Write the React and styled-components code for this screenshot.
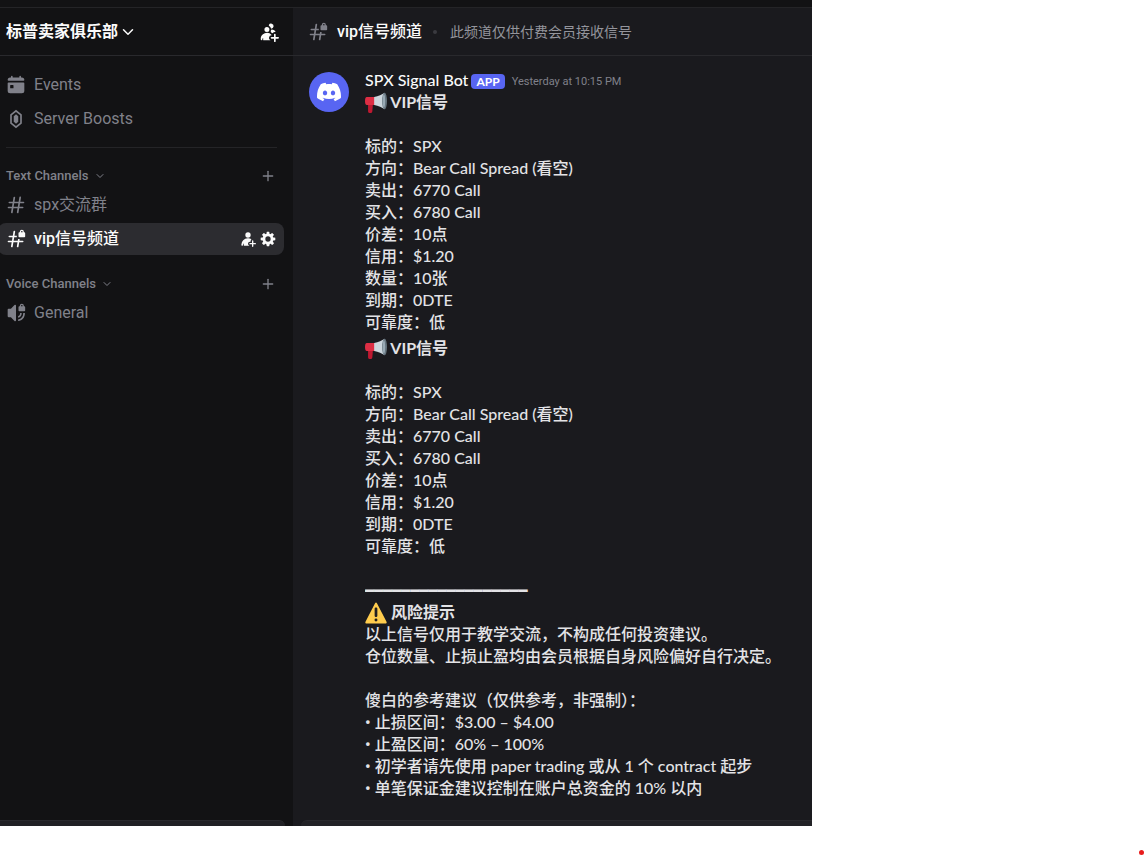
import styled, { createGlobalStyle } from "styled-components";
import { SiDiscord } from "react-icons/si";
import { ChevronDown, Plus } from "lucide-react";

const LOCK =
	"M16 4h.5v-.5a2.5 2.5 0 0 1 5 0V4h.5a1 1 0 0 1 1 1v4a1 1 0 0 1-1 1h-6a1 1 0 0 1-1-1V5a1 1 0 0 1 1-1Zm4-.5V4h-2v-.5a1 1 0 1 1 2 0Z";
const SMALL_PLUS =
	"M19 14a1 1 0 0 1 1 1v3h3a1 1 0 0 1 0 2h-3v3a1 1 0 0 1-2 0v-3h-3a1 1 0 1 1 0-2h3v-3a1 1 0 0 1 1-1Z";

const icons = {
	calendar: [
		"M7 1a1 1 0 0 1 1 1v.75c0 .14.11.25.25.25h7.5c.14 0 .25-.11.25-.25V2a1 1 0 1 1 2 0v.75c0 .14.11.25.25.25H19a3 3 0 0 1 3 3 1 1 0 0 1-1 1H3a1 1 0 0 1-1-1 3 3 0 0 1 3-3h.75c.14 0 .25-.11.25-.25V2a1 1 0 0 1 1-1Z",
		"M2 10a1 1 0 0 1 1-1h18a1 1 0 0 1 1 1v9a3 3 0 0 1-3 3H5a3 3 0 0 1-3-3v-9Zm3.5 2a.5.5 0 0 0-.5.5v3c0 .28.22.5.5.5h3a.5.5 0 0 0 .5-.5v-3a.5.5 0 0 0-.5-.5h-3Z",
	],
	boost: [
		"M12 1 19 6.6v10.8L12 23l-7-5.6V6.6L12 1Zm0 2.6L7 7.6v8.8l5 4 5-4V7.6l-5-4Z",
		"M12 6.2 14.7 8.6v6.8L12 17.8 9.3 15.4V8.6L12 6.2Z",
	],
	hash: [
		"M10.99 3.16A1 1 0 1 0 9 2.84L8.15 8H4a1 1 0 0 0 0 2h3.82l-.67 4H3a1 1 0 1 0 0 2h3.82l-.8 4.84a1 1 0 0 0 1.97.32L8.85 16h4.97l-.8 4.84a1 1 0 0 0 1.97.32l.86-5.16H20a1 1 0 1 0 0-2h-3.82l.67-4H21a1 1 0 1 0 0-2h-3.82l.8-4.84a1 1 0 1 0-1.97-.32L15.15 8h-4.97l.8-4.84ZM14.15 14l.67-4H9.85l-.67 4h4.97Z",
	],
	hashLock: [
		LOCK,
		"M12.5 8c.28 0 .5.22.5.5V9c0 .1 0 .2.02.31.03.34-.21.69-.56.69H9.85l-.67 4h4.97l.28-1.68c.06-.34.44-.52.77-.43a3 3 0 0 0 .8.11c.27 0 .47.24.43.5l-.25 1.5H20a1 1 0 1 1 0 2h-4.15l-.86 5.16a1 1 0 0 1-1.98-.32l.8-4.84H8.86l-.86 5.16A1 1 0 0 1 6 20.84L6.82 16H3a1 1 0 1 1 0-2h4.15l.67-4H4a1 1 0 1 1 0-2h4.15l.86-5.16a1 1 0 1 1 1.98.32L10.19 8h2.31Z",
	],
	speakerLock: [
		LOCK,
		"M12 3a1 1 0 0 0-1-1h-.06a1 1 0 0 0-.74.32L5.92 7H3a1 1 0 0 0-1 1v8a1 1 0 0 0 1 1h2.92l4.28 4.68a1 1 0 0 0 .74.32H11a1 1 0 0 0 1-1V3Z",
		"M16.9 12h2c0 3.3-1.6 5.2-4.4 5.7v-2c1.7-.5 2.4-1.6 2.4-3.7Z",
		"M20.7 12h2c0 5.5-2.9 8.9-8.2 9.7v-2c4.2-.8 6.2-3.3 6.2-7.7Z",
	],
	people: [
		"M14.5 8a3 3 0 1 0-2.7-4.3c-.2.4.06.86.44 1.12a5 5 0 0 1 2.14 3.08c.01.06.06.1.12.1ZM16.62 13.17c-.22.29-.65.37-.92.14-.34-.3-.7-.57-1.09-.82-.52-.33-.7-1.05-.47-1.63.11-.27.2-.57.26-.87.11-.54.55-1 1.1-.92 1.6.2 3.04.92 4.15 1.98.3.27-.25.95-.65.95a3 3 0 0 0-2.38 1.17ZM15.19 15.61c.13.16.02.39-.19.39a3 3 0 0 0-1.52 5.59c.2.12.26.41.02.41h-8a.5.5 0 0 1-.5-.5v-2.1c0-.25-.31-.33-.42-.1-.32.67-.67 1.58-.88 2.54a.2.2 0 0 1-.2.16A1.5 1.5 0 0 1 2 20.5a7.5 7.5 0 0 1 13.19-4.89ZM9.5 12a3 3 0 1 0 0-6 3 3 0 0 0 0 6Z",
		SMALL_PLUS,
	],
	person: [
		SMALL_PLUS,
		"M16.83 12.93c.26-.27.26-.75-.08-.92A9.5 9.5 0 0 0 12.47 11h-.94A9.53 9.53 0 0 0 2 20.53c0 .81.66 1.47 1.47 1.47h.22c.24 0 .44-.17.5-.4.29-1.12.84-2.17 1.32-2.91.14-.21.43-.1.4.15l-.26 2.61c-.02.3.2.55.5.55h7.64c.12 0 .17-.31.06-.36C12.82 21.14 12 20.22 12 19a3 3 0 0 1 3-3h.5a.5.5 0 0 0 .5-.5V15c0-.8.31-1.53.83-2.07ZM12 10a4 4 0 1 0 0-8 4 4 0 0 0 0 8Z",
	],
	gear: [
		"M10.56 1.1c-.46.05-.7.53-.64.98.18 1.16-.19 2.2-.98 2.53-.8.33-1.79-.15-2.49-1.1-.27-.36-.78-.52-1.14-.24-.77.59-1.45 1.27-2.04 2.04-.28.36-.12.87.24 1.14.96.7 1.43 1.7 1.1 2.49-.33.8-1.37 1.16-2.53.98-.45-.07-.93.18-.99.64a11.1 11.1 0 0 0 0 2.88c.06.46.54.7.99.64 1.16-.18 2.2.19 2.53.98.33.8-.14 1.79-1.1 2.49-.36.27-.52.78-.24 1.14.59.77 1.27 1.45 2.04 2.04.36.28.87.12 1.14-.24.7-.95 1.7-1.43 2.49-1.1.8.33 1.16 1.37.98 2.53-.07.45.18.93.64.99a11.1 11.1 0 0 0 2.88 0c.46-.06.7-.54.64-.99-.18-1.16.19-2.2.98-2.53.8-.33 1.79.14 2.49 1.1.27.36.78.52 1.14.24.77-.59 1.45-1.27 2.04-2.04.28-.36.12-.87-.24-1.14-.96-.7-1.43-1.7-1.1-2.49.33-.8 1.37-1.16 2.53-.98.45.07.93-.18.99-.64a11.1 11.1 0 0 0 0-2.88c-.06-.46-.54-.7-.99-.64-1.16.18-2.2-.19-2.53-.98-.33-.8.14-1.79 1.1-2.49.36-.27.52-.78.24-1.14a11.07 11.07 0 0 0-2.04-2.04c-.36-.28-.87-.12-1.14.24-.7.96-1.7 1.43-2.49 1.1-.8-.33-1.16-1.37-.98-2.53.07-.45-.18-.93-.64-.99a11.1 11.1 0 0 0-2.88 0ZM16 12a4 4 0 1 1-8 0 4 4 0 0 1 8 0Z",
	],
};

const Icon = ({ name, size = 20 }) => (
	<svg width={size} height={size} viewBox="0 0 24 24" fill="currentColor" aria-hidden="true">
		{icons[name].map((d) => (
			<path key={d} d={d} fillRule="evenodd" />
		))}
	</svg>
);

const Megaphone = () => (
	<Emoji viewBox="0 -2 36 36" role="img" aria-label="megaphone">
		<path fill="#be1931" d="M5 19h8l-1 12c-.2 2-1.5 3-3.5 3S5 33 5 31V19Z" />
		<path fill="#dd2e44" d="M3 8h14v13H3c-2 0-3-2-3-6.5S1 8 3 8Z" />
		<path fill="#ccd6dd" d="M15 8C22 7 28 4 32 1v27c-4-3-10-6-17-7V8Z" />
		<ellipse cx="32" cy="14.5" rx="4" ry="13.5" fill="#66757f" />
		<ellipse cx="31" cy="14.5" rx="2" ry="11" fill="#99aab5" />
	</Emoji>
);

const Warning = () => (
	<Emoji viewBox="0 -2 36 36" role="img" aria-label="warning">
		<path
			fill="#ffcc4d"
			d="M2.65 35C.81 35-.05 33.66.8 32.02L16.45 1.85c.85-1.64 2.25-1.64 3.1 0L35.2 32.02c.85 1.64-.01 2.98-1.85 2.98H2.65Z"
		/>
		<path
			fill="#231f20"
			d="M15.58 28.95a2.42 2.42 0 1 1 4.84 0 2.42 2.42 0 0 1-4.84 0Zm.19-18.29c0-1.3.96-2.1 2.23-2.1s2.23.84 2.23 2.1v11.56c0 1.26-.96 2.1-2.23 2.1s-2.23-.8-2.23-2.1V10.66Z"
		/>
	</Emoji>
);

const signal = [
	"",
	"标的：SPX",
	"方向：Bear Call Spread (看空)",
	"卖出：6770 Call",
	"买入：6780 Call",
	"价差：10点",
	"信用：$1.20",
	"数量：10张",
	"到期：0DTE",
	"可靠度：低",
];

const notice = [
	"以上信号仅用于教学交流，不构成任何投资建议。",
	"仓位数量、止损止盈均由会员根据自身风险偏好自行决定。",
	"",
	"傻白的参考建议（仅供参考，非强制）：",
];

const tips = [
	"止损区间：$3.00 – $4.00",
	"止盈区间：60% – 100%",
	"初学者请先使用 paper trading 或从 1 个 contract 起步",
	"单笔保证金建议控制在账户总资金的 10% 以内",
];

const Lines = ({ items }) => items.map((text, i) => <Line key={i}>{text}</Line>);

const Category = ({ title }) => (
	<CategoryRow>
		<CategoryButton>
			{title}
			<ChevronDown size={12} />
		</CategoryButton>
		<IconButton aria-label={`Create channel in ${title}`}>
			<Plus size={16} strokeWidth={2} />
		</IconButton>
	</CategoryRow>
);

const Channel = ({ icon, children }) => (
	<Row>
		<RowLink href="#">
			<Icon name={icon} />
			{children}
		</RowLink>
	</Row>
);

const App = () => {
	return (
		<Page>
			<GlobalStyle />
			<Window>
				<TitleBar />
				<Columns>
					<Sidebar>
						<Header>
							<ServerName>
								标普卖家俱乐部
								<ChevronDown size={18} strokeWidth={2} />
							</ServerName>
							<IconButton $bright aria-label="Invite to server">
								<Icon name="people" />
							</IconButton>
						</Header>
						<Nav>
							<Channel icon="calendar">Events</Channel>
							<Channel icon="boost">Server Boosts</Channel>
							<Divider />
							<Category title="Text Channels" />
							<Channel icon="hash">spx交流群</Channel>
							<Row $active>
								<RowLink href="#" $active>
									<Icon name="hashLock" />
									vip信号频道
								</RowLink>
								<IconButton $bright aria-label="Invite to channel">
									<Icon name="person" size={16} />
								</IconButton>
								<IconButton $bright aria-label="Edit channel">
									<Icon name="gear" size={16} />
								</IconButton>
							</Row>
							<Category title="Voice Channels" />
							<Channel icon="speakerLock">General</Channel>
						</Nav>
						<UserPanel />
					</Sidebar>
					<Chat>
						<Header $chat>
							<Icon name="hashLock" />
							<ChannelName>vip信号频道</ChannelName>
							<Dot />
							<Topic>此频道仅供付费会员接收信号</Topic>
						</Header>
						<Message>
							<Avatar>
								<SiDiscord size={24} />
							</Avatar>
							<Body>
								<Author>
									<span>SPX Signal Bot</span>
									<Badge>APP</Badge>
									<Time>Yesterday at 10:15 PM</Time>
								</Author>
								<Block>
									<Line as="h3">
										<Megaphone /> VIP信号
									</Line>
									<Lines items={signal} />
								</Block>
								<Block>
									<Line as="h3">
										<Megaphone /> VIP信号
									</Line>
									<Lines items={signal.filter((text) => !text.startsWith("数量"))} />
									<Line />
									<Rule>{"━".repeat(18)}</Rule>
									<Line as="h3">
										<Warning /> 风险提示
									</Line>
									<Lines items={notice} />
									{tips.map((tip) => (
										<Line key={tip}>
											<Bullet>•</Bullet> {tip}
										</Line>
									))}
								</Block>
							</Body>
						</Message>
						<Composer />
					</Chat>
				</Columns>
			</Window>
			<RecordingDot />
		</Page>
	);
};

const GlobalStyle = createGlobalStyle`
	* {
		box-sizing: border-box;
	}

	body {
		margin: 0;
		background: #fff;
		font-family: Roboto, "Noto Sans CJK SC", sans-serif;
		font-size: 16px;
	}

	button {
		padding: 0;
		border: 0;
		background: none;
		color: inherit;
		font: inherit;
		cursor: pointer;
	}

	svg {
		flex: none;
	}
`;

const Page = styled.div`
	position: relative;
	min-height: 100vh;
`;

const Window = styled.div`
	width: 70.9%;
	background: #121214;
	color: #e3e3e6;
	overflow: hidden;
`;

const TitleBar = styled.div`
	height: 8px;
	border-bottom: 1px solid #242427;
`;

const Columns = styled.div`
	display: grid;
	grid-template-columns: 293px minmax(0, 1fr);
`;

const Sidebar = styled.aside`
	display: flex;
	flex-direction: column;
	color: #80818a;
`;

const Header = styled.header`
	display: flex;
	align-items: center;
	justify-content: ${({ $chat }) => ($chat ? "flex-start" : "space-between")};
	height: 48px;
	padding: ${({ $chat }) => ($chat ? "0 15px" : "0 14px 0 6px")};
	border-bottom: 1px solid #29292d;
	color: #80818a;
`;

const ServerName = styled.button`
	display: flex;
	align-items: center;
	gap: 1px;
	color: #fbfbfb;
	font-weight: 700;
	line-height: 20px;
`;

const IconButton = styled.button`
	display: flex;
	color: ${({ $bright }) => ($bright ? "#fbfbfb" : "inherit")};
`;

const Nav = styled.nav`
	display: flex;
	flex-direction: column;
	flex: 1;
	padding: 13px 9px 0 0;
`;

const Row = styled.div`
	display: flex;
	align-items: center;
	gap: 4px;
	height: 32px;
	margin: 0 0 2px -2px;
	padding: 0 8px;
	border-radius: 8px;
	background: ${({ $active }) => ($active ? "#2c2c30" : "transparent")};
`;

const RowLink = styled.a`
	display: flex;
	flex: 1;
	align-items: center;
	gap: 8px;
	color: ${({ $active }) => ($active ? "#fbfbfb" : "inherit")};
	font-weight: ${({ $active }) => ($active ? 500 : 400)};
	line-height: 20px;
	text-decoration: none;
`;

const Divider = styled.hr`
	width: 271px;
	margin: 10px 0 1px 6px;
	border: 0;
	border-top: 1px solid #242427;
`;

const CategoryRow = styled.div`
	display: flex;
	align-items: center;
	justify-content: space-between;
	height: 24px;
	margin: 15px 0 1px;
	padding: 0 8px 0 6px;
`;

const CategoryButton = styled.button`
	display: flex;
	align-items: center;
	gap: 5px;
	font-size: 13px;
	font-weight: 500;
	line-height: 20px;
`;

const UserPanel = styled.div`
	height: 6px;
	margin-right: 8px;
	border-top: 1px solid #29292d;
	border-radius: 0 8px 0 0;
	background: #202024;
`;

const Chat = styled.main`
	display: flex;
	flex-direction: column;
	background: #1a1a1e;
`;

const ChannelName = styled.h1`
	margin: 0 0 0 9px;
	color: #fbfbfb;
	font-size: 16px;
	font-weight: 500;
	line-height: 20px;
`;

const Dot = styled.span`
	width: 4px;
	height: 4px;
	margin: 0 13px 0 11px;
	border-radius: 50%;
	background: #3a3a40;
`;

const Topic = styled.span`
	color: #94959c;
	font-size: 14px;
	line-height: 20px;
`;

const Message = styled.article`
	display: flex;
	gap: 16px;
	padding: 13px 16px 21px;
`;

const Avatar = styled.div`
	display: flex;
	flex: none;
	align-items: center;
	justify-content: center;
	width: 40px;
	height: 40px;
	margin-top: 3px;
	border-radius: 50%;
	background: #5865f2;
	color: #fff;
`;

const Body = styled.div`
	min-width: 0;
	font-family: Lato, "Noto Sans CJK SC", sans-serif;
	font-weight: 500;
	line-height: 22px;
`;

const Author = styled.div`
	display: flex;
	align-items: center;
	gap: 3px;
	height: 22px;
	color: #fbfbfb;
`;

const Badge = styled.span`
	margin-top: 2px;
	padding: 0 5px;
	border-radius: 4px;
	background: #5865f2;
	color: #fff;
	font-size: 12px;
	font-weight: 700;
	line-height: 15px;
`;

const Time = styled.time`
	margin: 4px 0 0 4px;
	color: #80818a;
	font-family: Roboto, sans-serif;
	font-size: 11px;
	font-weight: 400;
`;

const Block = styled.div`
	& + & {
		margin-top: 4px;
	}
`;

const Line = styled.p`
	min-height: 22px;
	margin: 0;
	font-size: 16px;
`;

const Rule = styled(Line)`
	height: 22px;
	padding-top: 1px;
	font-family: "DejaVu Sans Mono", monospace;
	font-size: 15px;
	overflow: hidden;
`;

const Bullet = styled.span`
	font-family: Roboto, sans-serif;
	line-height: 1;
`;

const Emoji = styled.svg`
	width: 22px;
	height: 22px;
	vertical-align: bottom;
	overflow: visible;
`;

const Composer = styled.div`
	height: 6px;
	margin-left: 8px;
	border-top: 1px solid #29292d;
	border-radius: 8px 0 0 0;
	background: #222226;
`;

/* sits over the page corner */
const RecordingDot = styled.span`
	position: absolute;
	right: 1px;
	bottom: 1px;
	width: 5px;
	height: 5px;
	border-radius: 50%;
	background: #e81c1c;
`;

export default App;
